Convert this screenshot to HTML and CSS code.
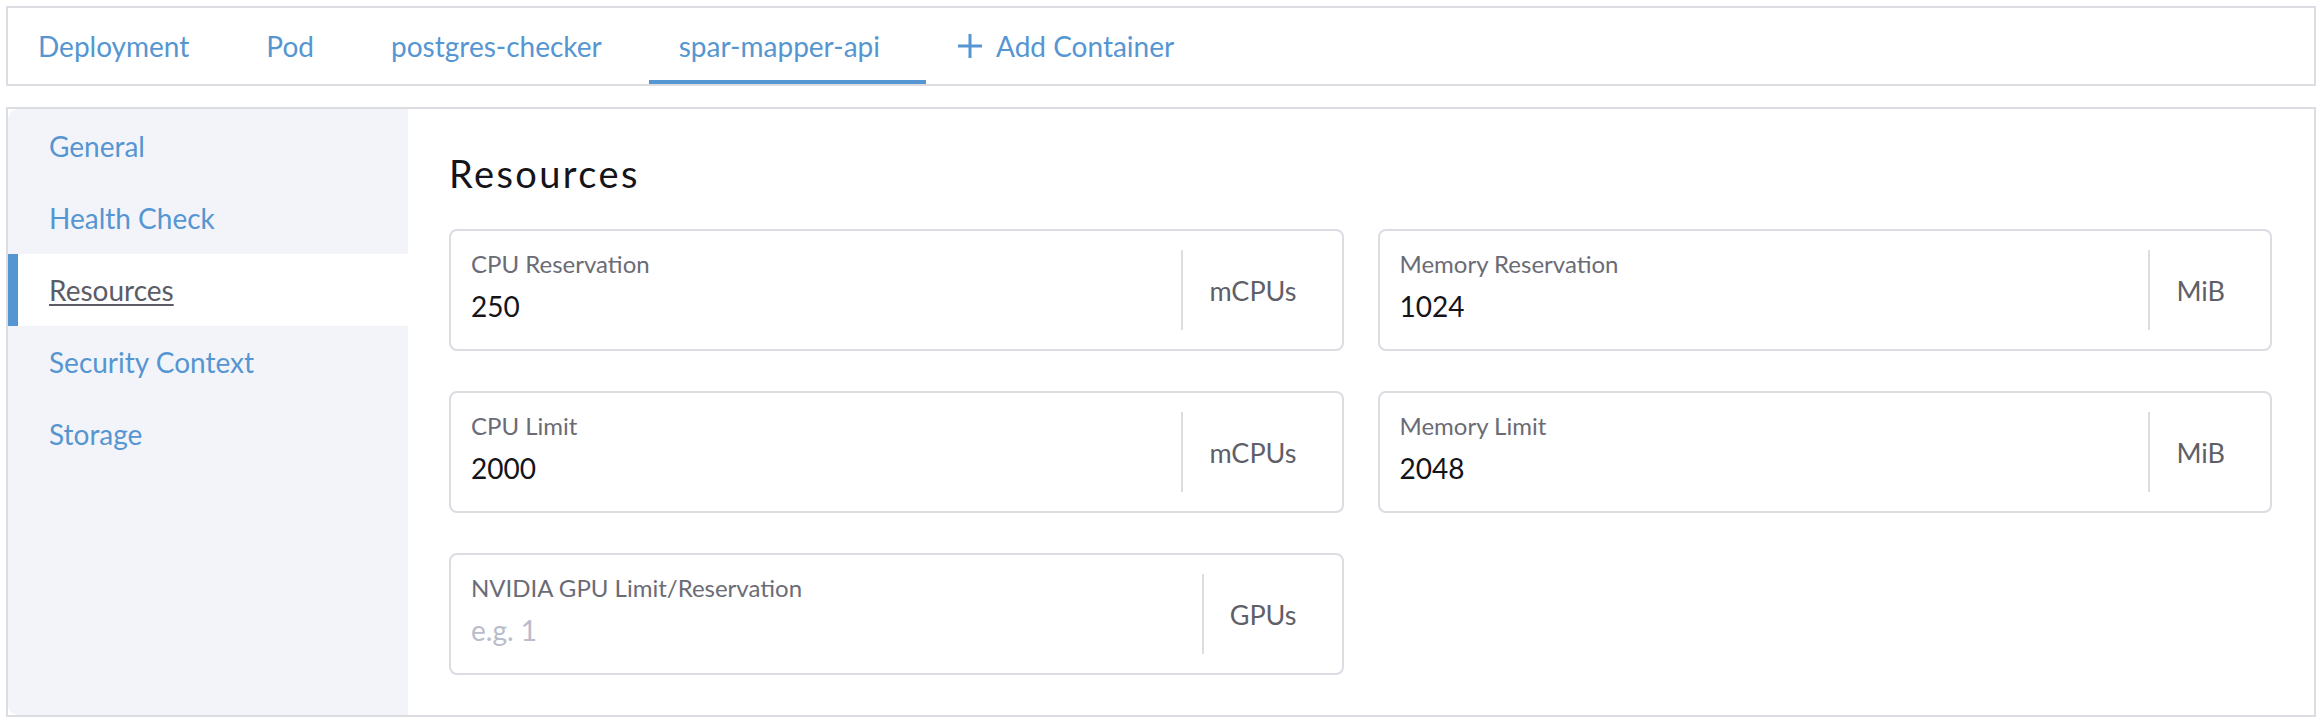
FILE: index.html
```html
<!DOCTYPE html>
<html>
<head>
<meta charset="utf-8">
<link rel="stylesheet" href="styles.css">
</head>
<body>
<div class="page">
  <nav class="tabs">
    <a class="tab">Deployment</a>
    <a class="tab">Pod</a>
    <a class="tab">postgres-checker</a>
    <a class="tab active">spar-mapper-api</a>
    <a class="tab add">
      <svg class="plus" width="26" height="26" viewBox="0 0 26 26"><path d="M13 1V25M1 13H25" stroke="#5596d2" stroke-width="3" fill="none"/></svg>
      <span>Add Container</span>
    </a>
  </nav>
  <section class="panel">
    <aside class="side">
      <a class="side-item">General</a>
      <a class="side-item">Health Check</a>
      <a class="side-item active"><span>Resources</span></a>
      <a class="side-item">Security Context</a>
      <a class="side-item">Storage</a>
    </aside>
    <main class="content">
      <h2 class="title">Resources</h2>
      <div class="grid">
        <div class="field">
          <div class="field-main">
            <label class="label">CPU Reservation</label>
            <div class="value">250</div>
          </div>
          <div class="unit">mCPUs</div>
        </div>
        <div class="field">
          <div class="field-main">
            <label class="label">Memory Reservation</label>
            <div class="value">1024</div>
          </div>
          <div class="unit">MiB</div>
        </div>
        <div class="field">
          <div class="field-main">
            <label class="label">CPU Limit</label>
            <div class="value">2000</div>
          </div>
          <div class="unit">mCPUs</div>
        </div>
        <div class="field">
          <div class="field-main">
            <label class="label">Memory Limit</label>
            <div class="value">2048</div>
          </div>
          <div class="unit">MiB</div>
        </div>
        <div class="field">
          <div class="field-main">
            <label class="label">NVIDIA GPU Limit/Reservation</label>
            <div class="value placeholder">e.g. 1</div>
          </div>
          <div class="unit">GPUs</div>
        </div>
      </div>
    </main>
  </section>
</div>
</body>
</html>
```

FILE: styles.css
```css
html, body {
  margin: 0;
  padding: 0;
  background: #ffffff;
}

body {
  font-family: Lato, "Open Sans", "Liberation Sans", sans-serif;
  color: #141419;
}

.page {
  padding: 6px 8px 0 6px;
}

.tabs {
  display: flex;
  align-items: stretch;
  height: 76px;
  border: 2px solid #dcdce3;
  gap: 17px;
}

.tab {
  display: flex;
  align-items: center;
  padding: 0 30px;
  font-size: 28px;
  color: #5596d2;
  border-bottom: 4px solid transparent;
  border-top: 4px solid transparent;
  box-sizing: border-box;
}

.tab.active {
  border-bottom-color: #5596d2;
  padding-right: 46px;
}

.tab.add {
  padding-left: 14px;
  gap: 13px;
}

.plus {
  display: block;
}

.panel {
  display: flex;
  margin-top: 21px;
  height: 606px;
  border: 2px solid #dcdce3;
}

.side {
  width: 400px;
  flex: none;
  background: #f3f4f9;
  border-radius: 10px 0 0 10px;
  display: flex;
  flex-direction: column;
  padding-top: 1px;
}

.side-item {
  display: flex;
  align-items: center;
  height: 72px;
  padding-left: 41px;
  font-size: 28px;
  color: #5596d2;
}

.side-item.active {
  background: #ffffff;
  box-shadow: inset 10px 0 0 #5596d2;
  color: #5c5c66;
}

.side-item.active span {
  text-decoration: underline;
  text-decoration-thickness: 2px;
  text-underline-offset: 3px;
}

.content {
  flex: 1;
  padding: 42px 42px 0 41px;
}

.title {
  margin: 0;
  font-size: 38px;
  letter-spacing: 2.4px;
  line-height: 44px;
  font-weight: 400;
  color: #141419;
}

.grid {
  margin-top: 34px;
  display: grid;
  grid-template-columns: 1fr 1fr;
  column-gap: 34px;
  row-gap: 40px;
}

.field {
  display: flex;
  height: 122px;
  box-sizing: border-box;
  border: 2px solid #dcdce3;
  border-radius: 8px;
}

.field-main {
  flex: 1;
  padding: 18px 20px 0 20px;
}

.label {
  display: block;
  font-size: 24px;
  line-height: 30px;
  color: #6b6b75;
}

.value {
  margin-top: 9px;
  font-size: 28px;
  line-height: 36px;
  color: #141419;
}

.value.placeholder {
  color: #b9bccb;
}

.unit {
  display: flex;
  align-items: center;
  margin: 19px 0;
  padding: 0 45px 0 26px;
  border-left: 2px solid #dcdce3;
  font-size: 27px;
  color: #5f5f69;
}
```
